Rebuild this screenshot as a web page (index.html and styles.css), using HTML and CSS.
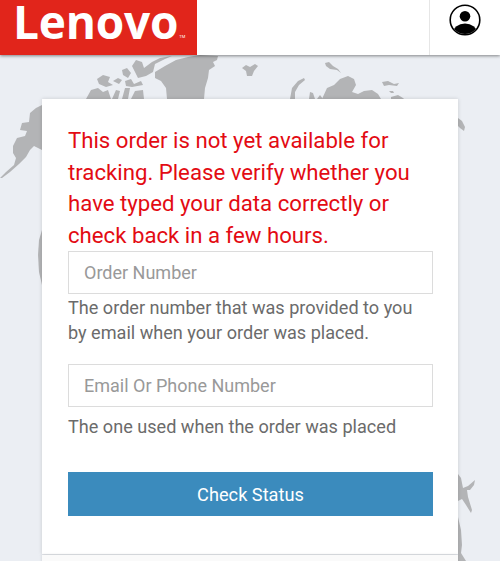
FILE: index.html
```html
<!DOCTYPE html>
<html lang="en">
<head>
    <meta charset="UTF-8">
    <meta name="viewport" content="width=device-width, initial-scale=1.0">
    <title>Order Status - Lenovo</title>
    <link rel="stylesheet" href="styles.css">
</head>
<body>
    <svg class="world-map" width="500" height="561" viewBox="0 0 500 561" aria-hidden="true">
        <!-- alaska -->
        <path d="M44 104L36 108L30 113L29 122L22 123L20 130L27 131L25 136L17 138L13 146L13 153L16 158L14 165L6 172L0 178L2 178L10 172L19 164L26 157L30 150L34 146L44 151Z"/>
        <!-- arctic islands -->
        <path d="M97 79L103 75L110 77L108 82L113 85L106 87L99 84Z"/>
        <path d="M86 99L91 90L98 88L103 92L108 90L111 99Z"/>
        <path d="M112 99L116 90L120 91L118 99ZM122 99L125 88L130 88L128 99ZM131 99L135 91L143 90L144 99Z"/>
        <path d="M113 81L118 78L122 80L119 84ZM122 70L127 68L131 73L128 78L123 75ZM125 81L131 79L134 84L141 81L143 85L132 87L126 86Z"/>
        <path d="M132 66L136 60L142 62L144 68L152 62L160 58L172 56L165 59L155 64L153 72L146 76L138 78L135 72Z"/>
        <!-- greenland -->
        <path d="M155 72L165 66L176 60L188 57L200 55L218 56L217 60L213 62L215 66L209 70L208 78L205 88L204 99L167 99L166 88L161 81L155 78Z"/>
        <path d="M242 68L246 65L250 67L255 64L258 66L254 71L252 76L247 76L246 71Z"/>
        <!-- russia and northern islands -->
        <path d="M325 63L329 62L333 66L338 69L341 73L337 70L330 69L326 66Z"/>
        <path d="M290 99L292 88L298 81L304 78L305 80L299 85L295 92L295 99Z"/>
        <path d="M309 99L310 92L313 93L315 99ZM317 99L320 95L323 99Z"/>
        <path d="M322 99L327 88L334 85L340 79L348 76L354 79L356 85L352 92L358 94L364 91L372 90L378 94L381 99Z"/>
        <path d="M382 82L388 81L394 84L399 83L397 86L389 85L384 86ZM389 91L393 91L394 93L391 93ZM391 97L398 95L403 98L404 99L391 99Z"/>
        <path d="M458 118L462 121L465 127L464 131L460 128L458 126Z"/>
        <!-- coast beside the card -->
        <path d="M42 230L39 240L38 255L39 272L42 285Z"/>
        <path d="M458 474L461 478L463 488L468 486L475 480L474 485L470 490L467 490L468 497L472 510L471 513L466 505L462 499L458 501Z"/>
        <path d="M458 517L461 530L462 545L461 553L466 561L458 561Z"/>
    </svg>

    <header class="site-header">
        <div class="logo">
            <span class="logo-text">Lenovo</span>
            <span class="logo-tm">TM</span>
        </div>
        <div class="account">
            <svg width="34" height="34" viewBox="0 0 34 34" aria-label="Account">
                <defs>
                    <clipPath id="avatarClip"><circle cx="17" cy="17" r="14"/></clipPath>
                </defs>
                <circle cx="17" cy="17" r="14.8" fill="#fff" stroke="#000" stroke-width="1.6"/>
                <circle cx="17" cy="13.2" r="5.3"/>
                <ellipse cx="17" cy="30" rx="12" ry="9.5" clip-path="url(#avatarClip)"/>
            </svg>
        </div>
    </header>

    <main class="status-card">
        <p class="error-message">This order is not yet available for tracking. Please verify whether you have typed your data correctly or check back in a few hours.</p>
        <form id="statusForm">
            <div class="form-group">
                <input type="text" id="orderNumber" placeholder="Order Number">
                <p class="hint">The order number that was provided to you by email when your order was placed.</p>
            </div>
            <div class="form-group form-group-last">
                <input type="text" id="contact" placeholder="Email Or Phone Number">
                <p class="hint hint-spaced">The one used when the order was placed</p>
            </div>
            <button type="submit">Check Status</button>
        </form>
    </main>
    <div class="next-card"></div>
</body>
</html>
```

FILE: styles.css
```css
html {
    height: 100%;
    overflow: hidden;
}
body {
    font-family: Roboto, "Liberation Sans", sans-serif;
    position: relative;
    height: 100%;
    margin: 0;
    overflow: hidden;
    background-color: #ebeef3;
}
.world-map {
    position: absolute;
    top: 0;
    left: 0;
    fill: #b3b4b6;
}
.site-header {
    position: relative;
    display: flex;
    justify-content: space-between;
    height: 55px;
    background-color: white;
    box-shadow: 0 1px 3px rgba(0, 0, 0, 0.45);
}
.logo {
    display: flex;
    align-items: flex-start;
    width: 197px;
    padding-left: 13px;
    box-sizing: border-box;
    background-color: #e1251b;
    color: white;
}
.logo-text {
    font-family: "Open Sans", Roboto, sans-serif;
    font-size: 46px;
    font-weight: 700;
    line-height: 42px;
    letter-spacing: -0.2px;
}
.logo-tm {
    margin-top: 35px;
    margin-left: 1px;
    font-size: 4px;
    line-height: 4px;
}
.account {
    display: flex;
    justify-content: center;
    align-items: flex-start;
    width: 71px;
    padding-top: 2.5px;
    box-sizing: border-box;
    border-left: 1px solid #e6e6e6;
}
.status-card {
    position: relative;
    width: 416px;
    box-sizing: border-box;
    margin: 44px 0 0 42px;
    padding: 26px 25px 38px 26px;
    background-color: white;
    box-shadow: 0 0 4px rgba(0, 0, 0, 0.15);
}
.error-message {
    margin: 0;
    color: #e30b13;
    font-size: 22.2px;
    line-height: 31.5px;
}
.form-group {
    margin-bottom: 19px;
}
.form-group-last {
    margin-bottom: 33px;
}
input {
    display: block;
    width: 100%;
    height: 43px;
    padding: 0 15px;
    box-sizing: border-box;
    border: 1px solid #dcdcdc;
    border-radius: 0;
    font-family: inherit;
    font-size: 18px;
    background-color: white;
}
input::placeholder {
    color: #999;
    opacity: 1;
}
.hint {
    margin: 0;
    padding-top: 1px;
    color: #6b6b6b;
    font-size: 18.1px;
    line-height: 25px;
}
.hint-spaced {
    padding-top: 7px;
}
button {
    display: block;
    width: 100%;
    height: 44px;
    border: none;
    background-color: #3b8bbd;
    color: white;
    font-family: inherit;
    font-size: 18.2px;
}
.next-card {
    position: relative;
    width: 416px;
    height: 20px;
    margin: 1px 0 0 42px;
    background-color: #fafafa;
    box-shadow: 0 0 3px rgba(0, 0, 0, 0.12);
}
```
